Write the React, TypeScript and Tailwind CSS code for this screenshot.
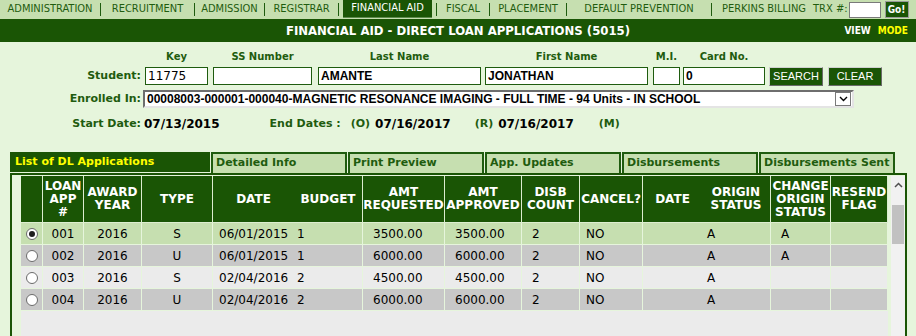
import React from 'react';

const navItems = [
    { label: 'ADMINISTRATION', w: 'w-[100px]', sep: false },
    { label: 'RECRUITMENT', w: 'w-[93px]', sep: true },
    { label: 'ADMISSION', w: 'w-[69px]', sep: true },
    { label: 'REGISTRAR', w: 'w-[73px]', sep: true },
];

const navItems2 = [
    { label: 'FISCAL', w: 'w-[52px]' },
    { label: 'PLACEMENT', w: 'w-[76px]' },
    { label: 'DEFAULT PREVENTION', w: 'w-[144px]' },
];

const tabs = [
    'Detailed Info',
    'Print Preview',
    'App. Updates',
    'Disbursements',
    'Disbursements Sent',
];

const rows = [
    { id: '001', year: '2016', type: 'S', date: '06/01/2015', budget: '1', req: '3500.00', appr: '3500.00', change: 'A', bg: 'bg-[#c6dfb0]', checked: true },
    { id: '002', year: '2016', type: 'U', date: '06/01/2015', budget: '1', req: '6000.00', appr: '6000.00', change: 'A', bg: 'bg-[#c8c8c8]', checked: false },
    { id: '003', year: '2016', type: 'S', date: '02/04/2016', budget: '2', req: '4500.00', appr: '4500.00', change: '', bg: 'bg-[#ebebeb]', checked: false },
    { id: '004', year: '2016', type: 'U', date: '02/04/2016', budget: '2', req: '6000.00', appr: '6000.00', change: '', bg: 'bg-[#c8c8c8]', checked: false },
];

const Sep = () => <div className="w-px h-[13px] bg-[#1f5c0f]" />;

const Head = ({ children, noRight }: { children?: React.ReactNode; noRight?: boolean }) => (
    <div
        className={`h-[47px] flex items-center justify-center text-center leading-[13px] border-b border-[#dcedd0] ${
            noRight ? '' : 'border-r'
        }`}
    >
        {children}
    </div>
);

const Cell = ({ children, className = '', noRight }: { children?: React.ReactNode; className?: string; noRight?: boolean }) => (
    <div className={`h-[22px] flex items-center border-b border-[#e6f5dc] ${noRight ? '' : 'border-r'} ${className}`}>
        {children}
    </div>
);

const Radio = ({ checked }: { checked: boolean }) => (
    <div className="w-[12px] h-[12px] rounded-full border border-[#6b6b6b] bg-white flex items-center justify-center">
        {checked && <div className="w-[6px] h-[6px] rounded-full bg-[#1e1e1e]" />}
    </div>
);

const FieldInput = ({ w, value, bold }: { w: string; value: string; bold?: boolean }) => (
    <div
        className={`${w} h-[18px] bg-white border border-[#1f5c0f] flex items-center px-[2px] text-black ${
            bold ? "font-['Liberation_Sans',sans-serif] font-bold text-[12px]" : 'text-[12px] font-normal'
        }`}
    >
        {value}
    </div>
);

const App = () => {
    return (
        <div className="w-[916px] h-[336px] overflow-hidden bg-[#e6f5dc] flex flex-col font-['DejaVu_Sans',sans-serif]">
            {/* top navigation */}
            <nav className="h-[19px] bg-[#c6dfb0] flex items-center text-[11px] text-[#1f5c0f] font-['DejaVu_Sans_Condensed','DejaVu_Sans',sans-serif] whitespace-nowrap">
                {navItems.map((item) => (
                    <React.Fragment key={item.label}>
                        {item.sep && <Sep />}
                        <div className={`${item.w} text-center`}>{item.label}</div>
                    </React.Fragment>
                ))}
                <Sep />
                <div className="w-[97px] h-[19px] px-[4px]">
                    <div className="h-[18px] bg-[#1a5505] text-white flex items-center justify-center border-b border-[#5d8a4c]">
                        FINANCIAL AID
                    </div>
                </div>
                {navItems2.map((item) => (
                    <React.Fragment key={item.label}>
                        <Sep />
                        <div className={`${item.w} text-center`}>{item.label}</div>
                    </React.Fragment>
                ))}
                <Sep />
                <div className="ml-[10px]">PERKINS BILLING</div>
                <div className="ml-[7px]">TRX #:</div>
                <div className="ml-[1px] w-[32px] h-[16px] bg-white border border-[#7a7a7a]" />
                <div className="ml-[4px] w-[24px] h-[17px] bg-[#1a5505] border border-[#9a9a9a] text-white font-bold text-[10px] flex items-center justify-center">
                    Go!
                </div>
            </nav>

            {/* title bar */}
            <div className="h-[23px] bg-[#1a5505] grid grid-cols-[1fr_auto_1fr] items-center">
                <div />
                <div className="text-white font-bold text-[13px] font-['DejaVu_Sans_Condensed','DejaVu_Sans',sans-serif]">
                    FINANCIAL AID - DIRECT LOAN APPLICATIONS (5015)
                </div>
                <div className="flex justify-end pr-[8px] gap-[7px] text-[10px] font-bold font-['DejaVu_Sans_Condensed','DejaVu_Sans',sans-serif]">
                    <span className="text-white">VIEW</span>
                    <span className="text-[#ffff00]">MODE</span>
                </div>
            </div>

            {/* student form */}
            <div className="pt-[9px] text-[#1f5c0f] font-bold">
                <div className="flex h-[12px] items-center text-[10px] leading-[12px] whitespace-nowrap">
                    <div className="w-[145px]" />
                    <div className="w-[63px] text-center">Key</div>
                    <div className="ml-[5px] w-[99px] text-center">SS Number</div>
                    <div className="ml-[6px] w-[163px] text-center">Last Name</div>
                    <div className="ml-[4px] w-[163px] text-center">First Name</div>
                    <div className="ml-[5px] w-[27px] text-center">M.I.</div>
                    <div className="ml-[3px] w-[82px] text-center">Card No.</div>
                </div>
                <div className="mt-[4px] flex items-center h-[18px] text-[11px]">
                    <div className="w-[141px] text-right">Student:</div>
                    <div className="ml-[4px]">
                        <FieldInput w="w-[63px]" value="11775" />
                    </div>
                    <div className="ml-[5px]">
                        <FieldInput w="w-[99px]" value="" />
                    </div>
                    <div className="ml-[6px]">
                        <FieldInput w="w-[163px]" value="AMANTE" bold />
                    </div>
                    <div className="ml-[4px]">
                        <FieldInput w="w-[163px]" value="JONATHAN" bold />
                    </div>
                    <div className="ml-[5px]">
                        <FieldInput w="w-[27px]" value="" />
                    </div>
                    <div className="ml-[3px]">
                        <FieldInput w="w-[82px]" value="0" bold />
                    </div>
                    <button className="ml-[4px] w-[54px] h-[19px] bg-[#1a5505] text-white font-normal text-[11px] font-['Liberation_Sans',sans-serif] border border-t-[#d0d0d0] border-l-[#d0d0d0] border-r-[#6a6a6a] border-b-[#6a6a6a]">
                        SEARCH
                    </button>
                    <button className="ml-[5px] w-[54px] h-[19px] bg-[#1a5505] text-white font-normal text-[11px] font-['Liberation_Sans',sans-serif] border border-t-[#d0d0d0] border-l-[#d0d0d0] border-r-[#6a6a6a] border-b-[#6a6a6a]">
                        CLEAR
                    </button>
                </div>
                <div className="mt-[5px] flex items-center h-[18px] text-[11px]">
                    <div className="w-[141px] text-right">Enrolled In:</div>
                    <div className="ml-[2px] w-[711px] h-[18px] bg-white border-2 border-t-[#6e6e6e] border-l-[#6e6e6e] border-r-[#e4e4e4] border-b-[#e4e4e4] flex items-center pl-[2px] pr-[1px]">
                        <span className="flex-1 text-black font-['Liberation_Sans',sans-serif] font-bold text-[12px] whitespace-nowrap overflow-hidden">
                            00008003-000001-000040-MAGNETIC RESONANCE IMAGING - FULL TIME - 94 Units - IN SCHOOL
                        </span>
                        <div className="w-[16px] h-[14px] border border-[#7a7a7a] bg-white flex items-center justify-center">
                            <svg width="9" height="6" viewBox="0 0 9 6">
                                <path d="M1 1 L4.5 4.5 L8 1" fill="none" stroke="#000" strokeWidth="1.4" />
                            </svg>
                        </div>
                    </div>
                </div>
                <div className="mt-[9px] flex items-center h-[14px] text-[11px] whitespace-nowrap">
                    <div className="w-[141px] text-right">Start Date:</div>
                    <div className="ml-[3px] text-black text-[12px]">07/13/2015</div>
                    <div className="ml-[50px]">End Dates :</div>
                    <div className="ml-[10px]">(O)</div>
                    <div className="ml-[5px] text-black text-[12px]">07/16/2017</div>
                    <div className="ml-[24px]">(R)</div>
                    <div className="ml-[5px] text-black text-[12px]">07/16/2017</div>
                    <div className="ml-[25px]">(M)</div>
                </div>
            </div>

            {/* tabs */}
            <div className="mt-[21px] flex pl-[10px] h-[21px] text-[11px] font-bold whitespace-nowrap">
                <div className="w-[200px] bg-[#1a5505] text-[#ffff00] flex items-center pl-[5px] border-b border-[#e6f5dc]">
                    List of DL Applications
                </div>
                {tabs.map((t) => (
                    <div
                        key={t}
                        className="w-[136px] ml-[1px] bg-[#c6dfb0] text-[#1f5c0f] flex items-center pl-[3px] border-2 border-b-0 border-[#1f5c0f]"
                    >
                        {t}
                    </div>
                ))}
            </div>

            {/* panel */}
            <div className="ml-[10px] w-[897px] flex-1 border-2 border-b-0 border-[#1a5505] flex pt-[1px]">
                <div className="ml-[9px] w-[867px] flex flex-col">
                    <div className="grid grid-cols-[22px_41px_58px_71px_81px_69px_82px_77px_58px_63px_59px_69px_60px_57px] bg-[#1a5505] text-white font-bold text-[12px] [&>div]:border-[#dcedd0]">
                        <Head />
                        <Head>
                            LOAN
                            <br />
                            APP
                            <br />#
                        </Head>
                        <Head>
                            AWARD
                            <br />
                            YEAR
                        </Head>
                        <Head>TYPE</Head>
                        <Head noRight>DATE</Head>
                        <Head>BUDGET</Head>
                        <Head>
                            AMT
                            <br />
                            REQUESTED
                        </Head>
                        <Head>
                            AMT
                            <br />
                            APPROVED
                        </Head>
                        <Head>
                            DISB
                            <br />
                            COUNT
                        </Head>
                        <Head>CANCEL?</Head>
                        <Head noRight>DATE</Head>
                        <Head>
                            ORIGIN
                            <br />
                            STATUS
                        </Head>
                        <Head>
                            CHANGE
                            <br />
                            ORIGIN
                            <br />
                            STATUS
                        </Head>
                        <Head>
                            RESEND
                            <br />
                            FLAG
                        </Head>
                    </div>
                    {rows.map((r) => (
                        <div
                            key={r.id}
                            className={`grid grid-cols-[22px_41px_58px_71px_81px_69px_82px_77px_58px_63px_59px_69px_60px_57px] ${r.bg} text-black text-[12px] whitespace-nowrap`}
                        >
                            <Cell className="justify-center">
                                <Radio checked={r.checked} />
                            </Cell>
                            <Cell className="justify-center">{r.id}</Cell>
                            <Cell className="justify-center">{r.year}</Cell>
                            <Cell className="justify-center">{r.type}</Cell>
                            <Cell className="pl-[6px]" noRight>
                                {r.date}
                            </Cell>
                            <Cell className="pl-[3px]">{r.budget}</Cell>
                            <Cell className="pl-[10px]">{r.req}</Cell>
                            <Cell className="pl-[10px]">{r.appr}</Cell>
                            <Cell className="pl-[10px]">2</Cell>
                            <Cell className="pl-[6px]">NO</Cell>
                            <Cell noRight />
                            <Cell className="pl-[5px]">A</Cell>
                            <Cell className="pl-[10px]">{r.change}</Cell>
                            <Cell />
                        </div>
                    ))}
                    <div className="flex-1 bg-[#ebebeb]" />
                </div>
                {/* scrollbar */}
                <div className="ml-[3px] w-[14px] bg-[#f1f1f1] flex flex-col items-center">
                    <div className="h-[17px] flex items-center justify-center">
                        <svg width="9" height="6" viewBox="0 0 9 6">
                            <path d="M1 5 L4.5 1.5 L8 5" fill="none" stroke="#505050" strokeWidth="1.5" />
                        </svg>
                    </div>
                    <div className="mt-[12px] w-[12px] h-[39px] bg-[#c1c1c1]" />
                </div>
            </div>
        </div>
    );
};

export default App;
